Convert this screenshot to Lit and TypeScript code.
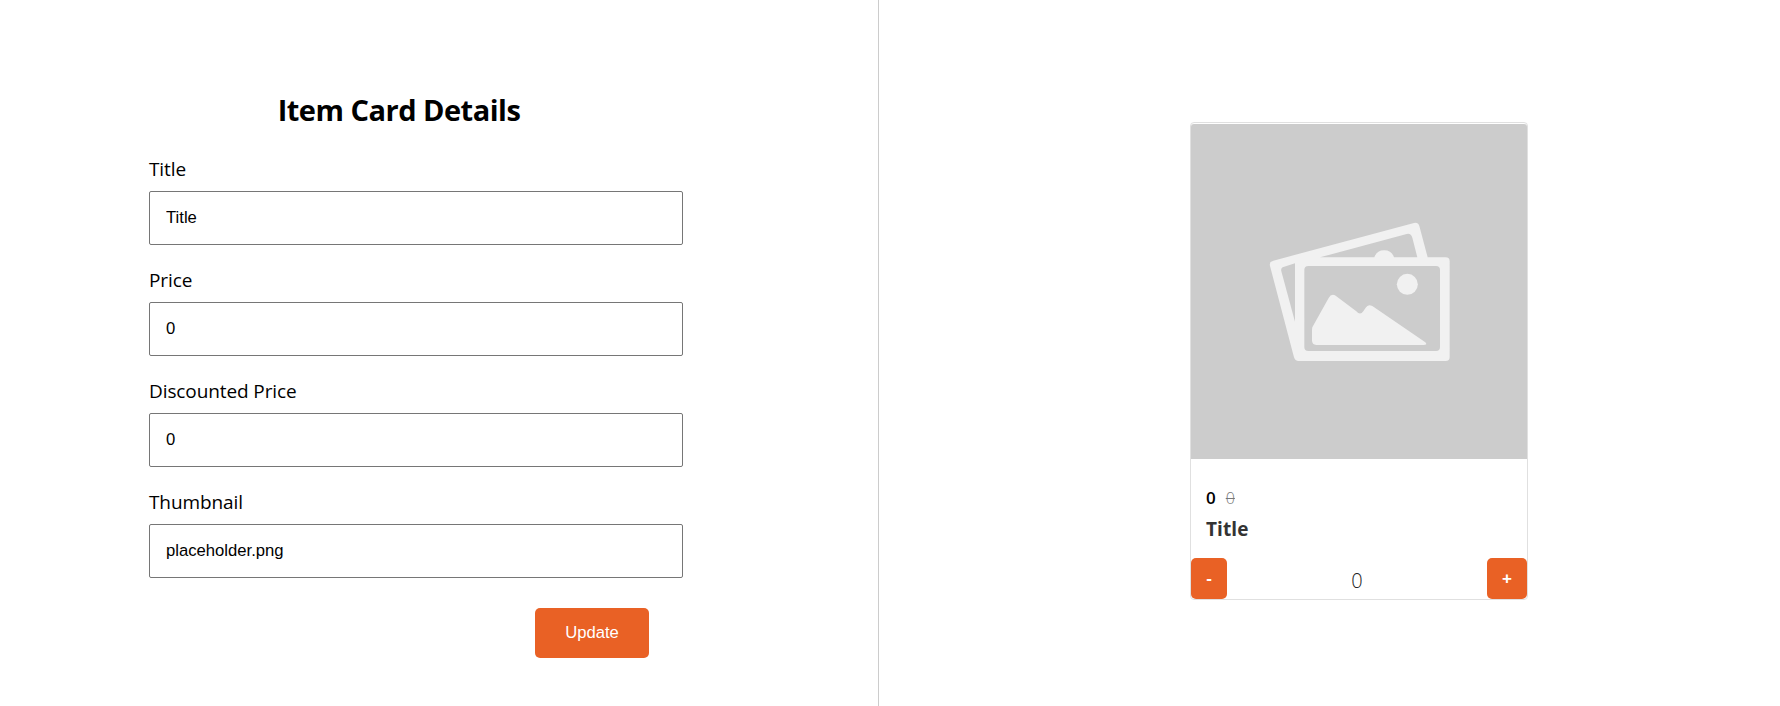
import { LitElement, html, css } from "lit";
import { customElement, property, state } from "lit/decorators.js";

@customElement("item-card")
class ItemCard extends LitElement {
  @property() heading = "";
  @property() price = "";
  @property() oldPrice = "";
  @state() count = 0;

  static styles = css`
    :host { display: block; }
    .card {
      box-sizing: border-box; width: 338px; height: 478px;
      border: 1px solid #e0e0e0; border-radius: 4px; padding-top: 1px;
      display: flex; flex-direction: column; background: #fff;
      font-family: "Segoe UI", "Open Sans", "Noto Sans", sans-serif;
    }
    .thumb { display: block; width: 336px; height: 335px; border-radius: 3px 3px 0 0; }
    .body { padding: 25px 15px 0; height: 74px; box-sizing: content-box; }
    .prices { display: flex; align-items: baseline; gap: 10px; height: 29px; line-height: 28px; }
    .now { font-size: 17px; font-weight: 600; color: #000; }
    .old { font-size: 16px; font-weight: 300; color: #777; text-decoration: line-through; }
    .name { font-size: 19px; font-weight: 700; line-height: 32px; color: #333; letter-spacing: 0.1px; }
    .counter { display: flex; justify-content: space-between; align-items: stretch; height: 41px; }
    .step {
      border: 0; margin: 0; padding: 0; width: 36px; border-radius: 5px; background: #e96125; color: #fff;
      font: 700 17px/36px "Liberation Sans", Arial, sans-serif;
    }
    .plus { width: 40px; }
    .count { font-size: 20px; font-weight: 300; line-height: 46px; height: 41px; color: #222; }
  `;

  render() {
    return html`
      <div class="card">
        <svg class="thumb" viewBox="0 0 336 335" preserveAspectRatio="none">
          <rect width="336" height="335" fill="#ccc" />
          <g transform="translate(59 86) scale(.33333)">
            <path fill="#f1f1f1" fill-rule="evenodd" d="M70 152L492 39Q504 36 508 48L533 142H587Q599 142 599 154V441Q599 453 587 453H146Q135 453 132 442L60 168Q57 155 70 152ZM98 172Q92 174 94 184L135 335V160ZM210 142H373A31 31 0 0 1 432 142H502L487 83Q483 69 470 72ZM175 168Q163 168 163 180V411Q163 423 175 423H558Q570 423 570 411V180Q570 168 558 168Z" />
            <circle cx="472" cy="223" r="31.500" fill="#f1f1f1" />
            <path fill="#f1f1f1" d="M187 352L236 264Q244 249 257 257L319 304Q331 318 341 302L347 293Q354 281 367 288L526 397Q534 405 520 405H199Q186 405 186 391V362Q186 356 187 352Z" />
          </g>
        </svg>
        <div class="body">
          <div class="prices"><span class="now">${this.price}</span><span class="old">${this.oldPrice}</span></div>
          <div class="name">${this.heading}</div>
        </div>
        <div class="counter">
          <button class="step" @click=${() => (this.count = Math.max(0, this.count - 1))}>-</button>
          <span class="count">${this.count}</span>
          <button class="step plus" @click=${() => this.count++}>+</button>
        </div>
      </div>`;
  }
}

@customElement("app-root")
class AppRoot extends LitElement {
  static styles = css`
    :host {
      display: flex; height: 706px; overflow: hidden; background: #fff; color: #000;
      font-family: "Segoe UI", "Open Sans", "Noto Sans", sans-serif;
    }
    .left { box-sizing: border-box; width: 879px; border-right: 1px solid #ccc; padding: 90px 0 0 149px; }
    .right { flex: 1; display: flex; justify-content: center; padding: 122px 0 0; margin-left: 59px; }
    .form { width: 534px; display: flex; flex-direction: column; }
    .title { margin: 0; width: 500px; height: 44px; line-height: 40px; text-align: center; font-size: 29px; font-weight: 700; letter-spacing: -0.5px; white-space: nowrap; }
    .field { display: flex; flex-direction: column; height: 111px; }
    .label { height: 57px; line-height: 71px; font-size: 19px; letter-spacing: -0.1px; }
    .input {
      box-sizing: border-box; width: 534px; height: 54px; border: 1px solid #767676; border-radius: 2px;
      padding: 0 16px; font: 16.67px "Liberation Sans", Arial, sans-serif; color: #000; background: #fff; outline: 0;
    }
    .update {
      align-self: flex-end; margin: 30px 34px 0 0; width: 114px; height: 50px; padding: 0; border: 0; border-radius: 5px;
      background: #e96125; color: #fff; font: 16.67px "Liberation Sans", Arial, sans-serif;
    }
  `;

  private fields = [
    ["Title", "Title"],
    ["Price", "0"],
    ["Discounted Price", "0"],
    ["Thumbnail", "placeholder.png"],
  ];

  render() {
    return html`
      <section class="left">
        <div class="form">
          <h2 class="title">Item Card Details</h2>
          ${this.fields.map(([label, value]) => html`
            <label class="field"><span class="label">${label}</span><input class="input" .value=${value} /></label>`)}
          <button class="update">Update</button>
        </div>
      </section>
      <section class="right">
        <item-card heading="Title" price="0" oldPrice="0"></item-card>
      </section>`;
  }
}
